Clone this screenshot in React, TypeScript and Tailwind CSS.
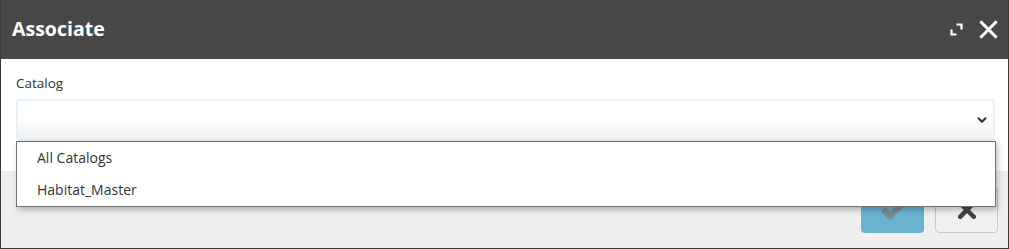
import { ChevronDown } from "lucide-react";

function ExpandIcon() {
  return (
    <svg width="13" height="13" viewBox="0 0 13 13" fill="none" stroke="#fff" strokeWidth="2.2">
      <path d="M1.5 6.5v5h5" />
      <path d="M6.5 1.5h5v5" />
    </svg>
  );
}

function CloseIcon({ color = "#fff", size = 19, width = 3 }: { color?: string; size?: number; width?: number }) {
  return (
    <svg width={size} height={size} viewBox="0 0 20 20" fill="none" stroke={color} strokeWidth={width} strokeLinecap="square">
      <path d="M2.5 2.5l15 15M17.5 2.5l-15 15" />
    </svg>
  );
}

const options = ["All Catalogs", "Habitat_Master"];

export default function App() {
  return (
    <div className="relative w-[1009px] h-[249px] flex flex-col bg-[#efefef] border-x border-b border-[#3a3a3a] font-['Open_Sans',sans-serif] text-[#333]">
      {/* Title bar */}
      <div className="h-[59px] shrink-0 bg-[#474747] flex items-center justify-between pl-[11px] pr-[10px]">
        <h1 className="text-[19.5px] font-bold text-white leading-none -mt-[1px]">Associate</h1>
        <div className="flex items-center gap-[16px]">
          <ExpandIcon />
          <CloseIcon />
        </div>
      </div>

      {/* Body */}
      <div className="h-[112px] shrink-0 bg-white pl-[15px] pr-[13px] pt-[15px]">
        <label className="block text-[13.5px] leading-[18px] text-[#333] mb-[7px]">Catalog</label>
        <div className="h-[42px] rounded-[3px] border-2 border-[#e3f1fa] bg-gradient-to-b from-white from-40% to-[#f2f2f2] flex items-center justify-end pr-[4px]">
          <ChevronDown size={14} strokeWidth={3.5} className="text-[#333]" />
        </div>
      </div>

      {/* Footer */}
      <div className="flex-1 flex justify-end items-start pt-[16px] pr-[10px] gap-[11px]">
        <button className="w-[63px] h-[46px] rounded-[4px] bg-[#69b3d0] flex items-center justify-center">
          <svg width="26" height="20" viewBox="0 0 26 20" fill="none" stroke="#7c8a90" strokeWidth="6">
            <path d="M3 9l7 7L23 3" />
          </svg>
        </button>
        <button className="w-[63px] h-[46px] rounded-[4px] border border-[#c8c8c8] bg-[#f0f0f0] flex items-center justify-center">
          <CloseIcon color="#444" size={18} width={5} />
        </button>
      </div>

      {/* Open dropdown list */}
      <ul className="absolute left-[15px] top-[141px] w-[980px] bg-white border border-[#707070] shadow-[2px_3px_6px_rgba(0,0,0,0.25)] text-[14px]">
        {options.map((o) => (
          <li key={o} className="h-[32px] leading-[32px] pl-[20px] text-[#333]">
            {o}
          </li>
        ))}
      </ul>
    </div>
  );
}
